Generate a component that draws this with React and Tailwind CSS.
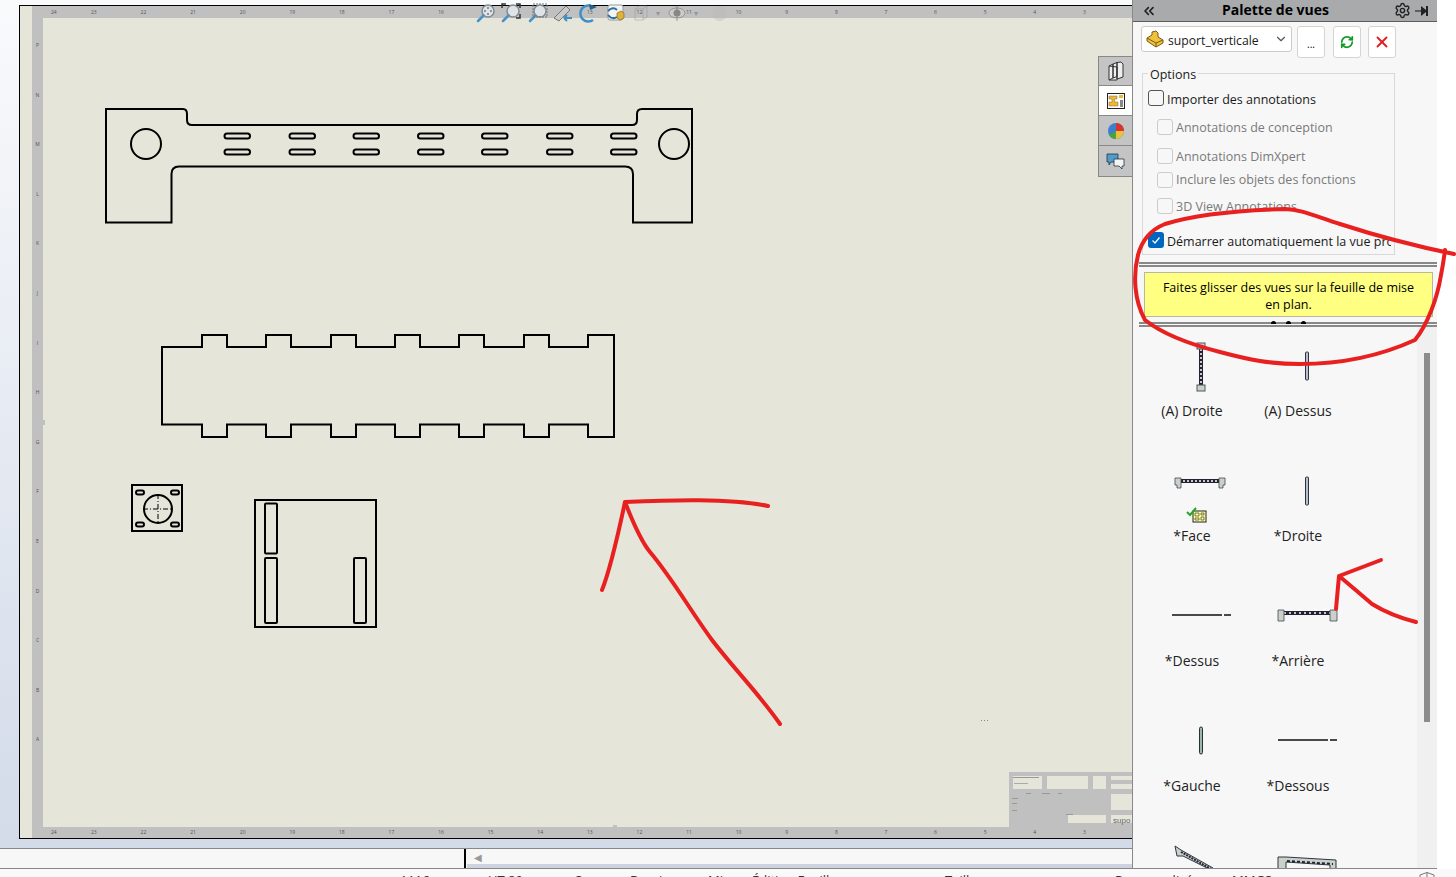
import React from 'react';
import { ChevronsLeft, ChevronDown, Settings, X, RefreshCw } from 'lucide-react';

const rulerNums = ['24', '23', '22', '21', '20', '19', '18', '17', '16', '15', '14', '13', '12', '11', '10', '9', '8', '7', '6', '5', '4', '3'];
const rulerLetters = ['P', 'N', 'M', 'L', 'K', 'J', 'I', 'H', 'G', 'F', 'E', 'D', 'C', 'B', 'A'];
const slotsX = [224.5, 289.5, 353.5, 418, 482, 547, 611];
const tabsX = [202, 266, 331, 395, 459, 524];

function Ruler() {
    return (
        <div className="h-full flex items-center pl-[19px] bg-[#c0c0c0]">
            {rulerNums.map((n, i) => (
                <span key={i} className={`flex-none text-[5px] leading-none text-[#555] ${i === 0 ? 'w-[40px]' : 'w-[49.6px]'}`}>{n}</span>
            ))}
        </div>
    );
}

function Drawing() {
    let top = 'M162 347';
    tabsX.forEach((x) => { top += ` H${x} V335 H${x + 25} V347`; });
    top += ' H588 V335 H614 V437 H588 V424.5';
    [...tabsX].reverse().forEach((x) => { top += ` H${x + 25} V437 H${x} V424.5`; });
    top += ' H162 Z';

    return (
        <svg className="absolute left-0 top-0 w-[1089px] h-[809px]" viewBox="43 18 1089 809" fill="none" stroke="#000" strokeWidth="2">
            {/* support du haut */}
            <path d="M106 109 H183 Q187 109 187 114 V120 Q187 125 192 125 H632 Q637 125 637 120 V114 Q637 109 642 109 H692 V222.5 H633 V174 Q633 166.5 625 166.5 H179 Q171.5 166.5 171.5 174 V222.5 H106 Z" />
            <circle cx="146" cy="144" r="15" />
            <circle cx="674" cy="144" r="15" />
            {slotsX.map((x) => (
                <g key={x}>
                    <rect x={x} y="133.5" width="25.5" height="5" rx="2.5" />
                    <rect x={x} y="149.5" width="25.5" height="5" rx="2.5" />
                </g>
            ))}
            {/* plaque crenelee */}
            <path d={top} />
            {/* petite platine */}
            <rect x="132" y="485" width="50" height="46" />
            <circle cx="158" cy="509" r="14" />
            <path d="M143 509 H173 M158 494 V524" strokeWidth="1" strokeDasharray="5 2 1 2" />
            <rect x="136" y="490.5" width="8" height="4" rx="2" />
            <rect x="171" y="490.5" width="8" height="4" rx="2" />
            <rect x="136" y="522.5" width="8" height="4" rx="2" />
            <rect x="171" y="522.5" width="8" height="4" rx="2" />
            {/* plaque a lumieres */}
            <rect x="255" y="500" width="121" height="127" />
            <rect x="265" y="503.5" width="12" height="50" rx="1" />
            <rect x="265" y="558" width="12" height="65" rx="1" />
            <rect x="354" y="558" width="12" height="65" rx="1" />
            {/* cartouche */}
            <g stroke="none">
                <rect x="1009" y="772" width="123" height="56" fill="#c0c0c0" />
                <rect x="1013" y="776" width="29" height="13" fill="#e5e5d9" />
                <rect x="1047" y="776" width="41" height="13" fill="#e5e5d9" />
                <rect x="1093" y="776" width="13" height="13" fill="#e5e5d9" />
                <rect x="1111" y="776" width="21" height="4" fill="#e5e5d9" />
                <rect x="1111" y="784" width="21" height="5" fill="#e5e5d9" />
                <rect x="1111" y="794" width="21" height="16" fill="#e5e5d9" />
                <rect x="1068" y="815" width="38" height="8" fill="#e5e5d9" />
                <rect x="1111" y="815" width="21" height="8" fill="#e5e5d9" />
                <text x="1113" y="823" fontSize="8" fill="#666" fontFamily="Liberation Sans, sans-serif">supo</text>
                <rect x="1013" y="777" width="26" height="1" fill="#999" />
                <rect x="1014" y="783" width="14" height="1" fill="#aaa" />
                <rect x="1026" y="793" width="5" height="1" fill="#999" />
                <rect x="1042" y="793" width="8" height="1" fill="#999" />
                <rect x="1058" y="793" width="4" height="1" fill="#999" />
                <rect x="1012" y="798" width="6" height="1" fill="#999" />
                <rect x="1012" y="803" width="5" height="1" fill="#999" />
                <rect x="1012" y="810" width="5" height="1" fill="#999" />
                <rect x="1066" y="814" width="7" height="1" fill="#999" />
                <rect x="1066" y="827" width="5" height="1" fill="#999" />
                <rect x="981" y="720" width="1" height="1" fill="#888" />
                <rect x="984" y="720" width="1" height="1" fill="#888" />
                <rect x="987" y="720" width="1" height="1" fill="#888" />
                <rect x="43" y="420" width="2" height="5" fill="#c0c0c0" />
                <rect x="613" y="825" width="4" height="2" fill="#c0c0c0" />
            </g>
        </svg>
    );
}

function Mag({ children }) {
    return (
        <svg width="20" height="20" viewBox="0 0 20 20" fill="none">
            <circle cx="12" cy="8" r="6" fill="#dfe3e6" stroke="#7d8c96" strokeWidth="1.5" />
            <path d="M7.5 12.5 L2 18" stroke="#4c93c4" strokeWidth="2.5" strokeLinecap="round" />
            {children}
        </svg>
    );
}

function HeadsUpBar() {
    return (
        <div className="absolute left-[476px] top-[3px] flex items-center gap-[5px]">
            <Mag><path d="M12 4 V6 M12 10 V12 M8 8 H10 M14 8 H16" stroke="#444" strokeWidth="1" /></Mag>
            <Mag><path d="M5 1 H1 V5 M15 1 H19 V5 M19 11 V15 H15" stroke="#333" strokeWidth="1.5" /></Mag>
            <div className="ml-[2px]">
                <Mag><rect x="5" y="1" width="14" height="13" stroke="#777" strokeWidth="1" strokeDasharray="2 1" /></Mag>
            </div>
            <svg width="20" height="20" viewBox="0 0 20 20" fill="none">
                <path d="M1 15 L13 3 L17 7 L6 18 Z" fill="#c9c9c9" stroke="#777" />
                <path d="M11 15 H19 M11 15 L14 12 M11 15 L14 18" stroke="#3f8fc4" strokeWidth="2" />
            </svg>
            <svg width="20" height="20" viewBox="0 0 20 20" fill="none" className="ml-[1px]">
                <path d="M14 4 A8 8 0 1 0 14 17" stroke="#3f8fc4" strokeWidth="2.5" />
                <path d="M10 1 L18 4 L11 7 Z" fill="#245f86" />
            </svg>
            <svg width="20" height="20" viewBox="0 0 20 20" fill="none" className="ml-[2px]">
                <rect x="2" y="2" width="15" height="15" rx="2" fill="#f4f4f4" stroke="#999" />
                <path d="M2 8 Q7 3 11 7 M11 14 Q6 17 2 12" stroke="#2d6f9f" strokeWidth="2" />
                <path d="M11 10 L15 8 L18 10 V15 L14 17 L11 15 Z" fill="#e0b23c" stroke="#8a6a1a" strokeWidth=".7" />
            </svg>
            <div className="flex items-center opacity-40 ml-[3px] gap-[8px]">
                <svg width="14" height="16" viewBox="0 0 14 16" fill="none">
                    <path d="M1 4 L5 1 H13 V12 L9 15 H1 Z M1 4 H9 V15 M9 4 L13 1" stroke="#888" />
                </svg>
                <span className="text-[8px] leading-none text-[#555]">▾</span>
                <svg width="18" height="16" viewBox="0 0 18 16">
                    <ellipse cx="9" cy="8" rx="8" ry="5" fill="#ddd" stroke="#555" />
                    <circle cx="9" cy="8" r="3.5" fill="#333" />
                    <path d="M9 0 V16" stroke="#333" />
                </svg>
                <span className="text-[8px] leading-none text-[#555]">▾</span>
                <div className="ml-[6px] w-[15px] h-[15px] rounded-full bg-[#bbb]" />
            </div>
        </div>
    );
}

function ViewTabs() {
    return (
        <div className="absolute right-0 top-[56px] w-[34px] flex flex-col border-t border-l border-b border-[#888]">
            <div className="h-[29px] bg-[#c4c4c4] border-b border-[#888] flex items-center justify-center">
                <svg width="18" height="20" viewBox="0 0 18 20" fill="#eee" stroke="#333">
                    <path d="M2 5 L6 3 V17 L2 19 Z M6 3 L10 1.5 V15.5 L6 17 Z M10 1.5 L14 1 L16 3 V16 L10 18 Z M2 5 L10 6 V19 L2 19" />
                </svg>
            </div>
            <div className="h-[30px] bg-white border-b border-[#888] flex items-center justify-center">
                <svg width="18" height="18" viewBox="0 0 18 18">
                    <rect x=".5" y="1.5" width="17" height="15" fill="#fff" stroke="#222" />
                    <path d="M2 4 H10 V7 H7.5 V10 H11 V14 H2 V10 H5 V7 H2 Z" fill="#f0b92c" stroke="#765" strokeWidth=".5" />
                    <rect x="12" y="3" width="4" height="3" fill="#f0b92c" />
                    <rect x="13" y="8" width="3" height="7" fill="#888" />
                </svg>
            </div>
            <div className="h-[30px] bg-[#c4c4c4] border-b border-[#888] flex items-center justify-center">
                <svg width="18" height="18" viewBox="0 0 18 18">
                    <circle cx="9" cy="9" r="8" fill="#3c7fd0" />
                    <path d="M9 9 L9 1 A8 8 0 0 1 17 9 Z" fill="#d8342c" />
                    <path d="M9 9 L17 9 A8 8 0 0 1 9 17 Z" fill="#e8c43c" />
                    <path d="M9 9 L9 17 A8 8 0 0 1 2 13 Z" fill="#4aa33c" />
                </svg>
            </div>
            <div className="h-[30px] bg-[#c4c4c4] flex items-center justify-center">
                <svg width="19" height="17" viewBox="0 0 19 17">
                    <path d="M1 1 H12 V9 H5 L3 12 V9 H1 Z" fill="#4f9cc9" stroke="#234" strokeWidth=".8" />
                    <path d="M8 6 H18 V13 H16 V16 L13 13 H8 Z" fill="#f4f4f4" stroke="#234" strokeWidth=".8" />
                </svg>
            </div>
        </div>
    );
}

function Check({ kind }) {
    if (kind === 'on') {
        return (
            <span className="w-4 h-4 flex-none rounded-[3px] bg-[#0067c0] flex items-center justify-center">
                <svg width="10" height="10" viewBox="0 0 10 10" fill="none" stroke="#fff" strokeWidth="1.2"><path d="M1.5 5.5 L4 8 L8.5 2.5" /></svg>
            </span>
        );
    }
    if (kind === 'off') {
        return <span className="w-4 h-4 flex-none rounded-[3px] border border-[#555] bg-[#f7f7f7]" />;
    }
    return <span className="w-4 h-4 flex-none rounded-[3px] border border-[#ccc] bg-[#f7f7f7]" />;
}

function OptRow({ kind, text, className, textClass }) {
    const sub = kind === 'dis';
    return (
        <div className={`h-4 flex items-center whitespace-nowrap ${sub ? 'pl-[14px] gap-[3px] text-[#7a7a7a]' : 'pl-[5px] gap-[3px] text-[#1a1a1a]'} ${className}`}>
            <Check kind={kind} />
            <span className={`w-[224px] overflow-hidden ${textClass}`}>{text}</span>
        </div>
    );
}

const Squares = ({ x, y }) => <rect x={x} y={y} width="8" height="6" fill="#c8d2c8" stroke="#556" strokeWidth="1" />;

function Thumb({ type }) {
    return (
        <svg width="106" height="70" viewBox="0 0 106 70" fill="none" className="block">
            {type === 'tall' && (
                <g>
                    <rect x="60" y="14" width="4" height="44" fill="#223" />
                    <path d="M62 15 V57" stroke="#fff" strokeWidth="1.5" strokeDasharray="2 2" />
                    <Squares x="58" y="13" />
                    <Squares x="58" y="55" />
                </g>
            )}
            {type === 'thin' && <rect x="60.5" y="22" width="3" height="28" rx="1" fill="#b5c0c8" stroke="#334" />}
            {type === 'face' && (
                <g>
                    <rect x="37" y="24" width="48" height="4" fill="#223" />
                    <path d="M40 26 H83" stroke="#fff" strokeDasharray="2 2" strokeWidth="1.5" />
                    <path d="M36 23 H42 V33 H38 V30 H36 Z M86 23 H80 V33 H84 V30 H86 Z" fill="#c8d2c8" stroke="#445" strokeWidth=".8" />
                    <rect x="54" y="56" width="13" height="11" fill="#ffffa0" stroke="#222" />
                    <path d="M56 58 H60 V61 H56 Z M62 58 H65 V60 H62 Z M56 63 H60 V65 H56 Z M62 62 H65 V65 H62 Z" stroke="#222" strokeWidth=".6" />
                    <path d="M48 57 L51 60 L57 53" stroke="#22a52a" strokeWidth="2" />
                </g>
            )}
            {type === 'hline' && <path d="M33 35 H83 M85 35 H92" stroke="#111" strokeWidth="1.5" />}
            {type === 'back' && (
                <g>
                    <rect x="36" y="31" width="54" height="4" fill="#223" />
                    <path d="M39 33 H88" stroke="#fff" strokeDasharray="2 3" strokeWidth="1.5" />
                    <path d="M33 30 H39 V41 H33 Z M92 30 H85 V41 H92 Z" fill="#c8d2c8" stroke="#445" strokeWidth=".8" />
                </g>
            )}
            {type === 'gauche' && <rect x="60.5" y="22" width="3" height="27" rx="1.5" fill="#9fb5ac" stroke="#233" />}
            {type === 'iso1' && (
                <g>
                    <path d="M36 16 L42 20 L74 38 L72 40 L44 26 L38 26 Z" fill="#c8d2c8" stroke="#334" />
                    <path d="M42 22 L74 40" stroke="#223" strokeWidth="2" strokeDasharray="2 1" />
                </g>
            )}
            {type === 'iso2' && (
                <g>
                    <path d="M33 27 H41 L91 30 V40 H85 V35 L41 32 V40 H33 Z" fill="#c8d2c8" stroke="#334" />
                    <path d="M42 31 L88 34" stroke="#223" strokeWidth="2" strokeDasharray="3 2" />
                </g>
            )}
        </svg>
    );
}

const views = [
    ['tall', '(A) Droite'], ['thin', '(A) Dessus'],
    ['face', '*Face'], ['thin', '*Droite'],
    ['hline', '*Dessus'], ['back', '*Arrière'],
    ['gauche', '*Gauche'], ['hline', '*Dessous'],
    ['iso1', ''], ['iso2', ''],
];

const statusBits = [
    ['w-[88px]', '1116'], ['w-[87px]', 'UT 80'], ['w-[55px]', 'Sous'], ['w-[78px]', 'Dessin'], ['w-[44px]', 'Mise'],
    ['w-[193px]', 'Édition Feuille'], ['w-[170px]', 'Taille'], ['w-[117px]', 'Personnalisé'], ['w-[60px]', 'MMGS'],
];

function Panel() {
    return (
        <div className="w-[305px] flex-none h-full flex flex-col border-l border-[#888] border-b bg-[#f7f7f7] overflow-hidden">
            <div className="h-[22px] flex-none bg-[#a9aaac] border-b border-[#5c5c5c] flex items-center relative">
                <ChevronsLeft size={16} strokeWidth={2.5} className="ml-[8px] text-[#222]" />
                <span className="absolute left-[89px] top-0 leading-[19px] text-[14px] font-bold text-black">Palette de vues</span>
                <Settings size={17} className="ml-auto text-[#222]" />
                <svg width="16" height="12" viewBox="0 0 16 12" className="ml-[4px] mr-[6px]">
                    <path d="M0 6 H6" stroke="#444" strokeWidth="1.5" />
                    <path d="M6 1 L11 5 V7 L6 11 Z" fill="#222" />
                    <rect x="11" y="1" width="2" height="10" fill="#222" />
                </svg>
            </div>
            <div className="flex-none flex mt-[4px] ml-[8px]">
                <div className="w-[151px] h-[26px] bg-white border border-[#ccc] rounded-[3px] flex items-center pl-[4px] pr-[3px]">
                    <svg width="18" height="18" viewBox="0 0 18 18">
                        <path d="M1 8 L6 5 V2 L10 1 L12 3 V7 L17 10 V13 L10 17 L1 11 Z" fill="#f0c23c" stroke="#7a5a10" />
                        <path d="M1 8 L10 13 V17 M10 13 L17 10" fill="none" stroke="#7a5a10" />
                    </svg>
                    <span className="ml-[4px] mt-[3px] text-[12.2px] text-[#1a1a1a]">suport_verticale</span>
                    <ChevronDown size={14} className="ml-auto text-[#555]" />
                </div>
                <div className="ml-[5px] w-[28px] h-[32px] bg-white border border-[#d4d4d4] rounded-[3px] flex items-end justify-center pb-[8px] text-[10px] leading-none text-black">...</div>
                <div className="ml-[8px] w-[28px] h-[32px] bg-white border border-[#d4d4d4] rounded-[3px] flex items-center justify-center">
                    <RefreshCw size={14} strokeWidth={3} className="text-[#0f9a26]" />
                </div>
                <div className="ml-[7px] w-[28px] h-[32px] bg-white border border-[#d4d4d4] rounded-[3px] flex items-center justify-center">
                    <X size={18} strokeWidth={2.5} className="text-[#e02020]" />
                </div>
            </div>
            <div className="flex-none relative mt-[15px] ml-[9px] w-[253px] h-[182px] border border-[#d8d8d8] pt-[16px]">
                <span className="absolute left-[5px] top-[-7px] leading-[16px] px-[2px] bg-[#f7f7f7] text-[#1a1a1a]">Options</span>
                <OptRow kind="off" text="Importer des annotations" textClass="pt-[4px]" />
                <OptRow kind="dis" text="Annotations de conception" className="mt-[13px]" textClass="pt-[2px]" />
                <OptRow kind="dis" text="Annotations DimXpert" className="mt-[13px]" textClass="pt-[2px]" />
                <OptRow kind="dis" text="Inclure les objets des fonctions" className="mt-[8px]" />
                <OptRow kind="dis" text="3D View Annotations" className="mt-[10px]" textClass="pt-[2px]" />
                <OptRow kind="on" text="Démarrer automatiquement la vue proj" className="mt-[18px]" textClass="pt-[4px]" />
            </div>
            <div className="flex-none mt-[7px] ml-[6px] h-[5px] border-y-2 border-[#888]" />
            <div className="flex-none mt-[5px] ml-[11px] w-[289px] h-[45px] bg-[#ffff82] border border-[#b8b8a0] flex items-center justify-center text-center text-black leading-[17px] px-[10px] pt-[2px]">
                Faites glisser des vues sur la feuille de mise en plan.
            </div>
            <div className="flex-none relative mt-[5px] ml-[6px] h-[5px] border-y-2 border-[#888]">
                <div className="absolute left-[132px] top-[-3px] flex gap-[10px]">
                    <span className="w-[5px] h-[3px] bg-black rounded-t-full" />
                    <span className="w-[5px] h-[3px] bg-black rounded-t-full" />
                    <span className="w-[5px] h-[3px] bg-black rounded-t-full" />
                </div>
            </div>
            <div className="flex-1 min-h-0 flex">
                <div className="flex-1 pl-[6px] grid grid-cols-[106px_106px] auto-rows-[125px] overflow-hidden pt-[3px]">
                    {views.map(([type, label], i) => (
                        <div key={i}>
                            <Thumb type={type} />
                            <div className="h-[22px] leading-[22px] text-center text-[14px] text-[#222]">{label}</div>
                        </div>
                    ))}
                </div>
                <div className="w-[20px] flex-none bg-[#f0f0f0] pl-[7px] pt-[26px]">
                    <div className="w-[6px] h-[369px] bg-[#8c8c8c]" />
                </div>
            </div>
        </div>
    );
}

export default function App() {
    return (
        <div className="relative w-[1456px] h-[877px] overflow-hidden bg-white text-[12.5px] leading-[16px] font-['Open_Sans',sans-serif]">
            <div className="h-[869px] flex">
                <div className="w-[1132px] flex-none flex flex-col">
                    <div className="h-[848px] flex-none relative pl-[19px] pt-[5px] pb-[9px] bg-gradient-to-b from-[#f9fafc] to-[#d3dbe9]">
                        <div className="h-[834px] border-l border-y border-black flex overflow-hidden bg-[#c0c0c0]">
                            <div className="w-[12px] flex-none bg-[#e5e5d9]" />
                            <div className="flex-1 flex flex-col min-w-0">
                                <div className="h-[12px] flex-none"><Ruler /></div>
                                <div className="flex-1 flex min-h-0">
                                    <div className="w-[11px] flex-none flex flex-col items-center pt-[25px]">
                                        {rulerLetters.map((l) => (
                                            <span key={l} className="h-[49.6px] flex-none text-[5px] leading-none text-[#555]">{l}</span>
                                        ))}
                                    </div>
                                    <div className="flex-1 relative bg-[#e5e5d9]">
                                        <Drawing />
                                    </div>
                                </div>
                                <div className="h-[11px] flex-none"><Ruler /></div>
                            </div>
                        </div>
                        <HeadsUpBar />
                        <ViewTabs />
                    </div>
                    <div className="h-[21px] flex-none flex border-y border-[#888] bg-[#f7f7f7]">
                        <div className="w-[466px] flex-none border-r-2 border-black" />
                        <div className="flex-1 flex flex-col ml-[1px]">
                            <div className="flex-1 flex items-center pl-[7px] text-[#999] text-[10px] leading-none">◀</div>
                            <div className="h-[4px] bg-[#ccd3df]" />
                        </div>
                    </div>
                </div>
                <Panel />
                <div className="flex-1 bg-white" />
            </div>
            <div className="relative h-[8px] flex overflow-hidden bg-[#f9f9f9] pl-[400px] pt-[3px] text-[13px] leading-[16px] text-[#333] whitespace-nowrap">
                {statusBits.map(([w, t]) => (
                    <span key={t} className={`flex-none ${w}`}>{t}</span>
                ))}
                <svg width="16" height="8" viewBox="0 0 16 8" fill="none" stroke="#777" className="absolute left-[1419px] top-[3px]">
                    <path d="M1 8 V3 L8 0.5 L15 3 V8 M8 0.5 V8" />
                </svg>
            </div>
            <svg className="absolute left-0 top-0 w-[1456px] h-[877px] pointer-events-none" viewBox="0 0 1456 877" fill="none" stroke="#e8201f" strokeWidth="4" strokeLinecap="round" strokeLinejoin="round">
                <path d="M1454 254 C1420 247 1380 237 1340 224 C1315 216 1300 209 1285 209 C1250 210 1200 213 1165 224 C1150 230 1142 240 1138 255 C1133 275 1134 300 1145 320 C1160 332 1185 343 1220 352 C1250 360 1270 364 1300 364 C1340 364 1380 356 1415 340 C1427 325 1437 300 1441 275 C1443 265 1444 258 1445 250" />
                <path d="M602 590 C610 570 618 535 625 502 C670 500 730 498 768 506" />
                <path d="M625 502 C632 520 640 540 650 552 C672 578 690 610 712 640 C735 670 760 695 780 724" />
                <path d="M1416 622 C1400 618 1385 612 1372 604 C1360 594 1350 585 1339 576 L1381 560 M1339 576 L1336 609" />
            </svg>
        </div>
    );
}
